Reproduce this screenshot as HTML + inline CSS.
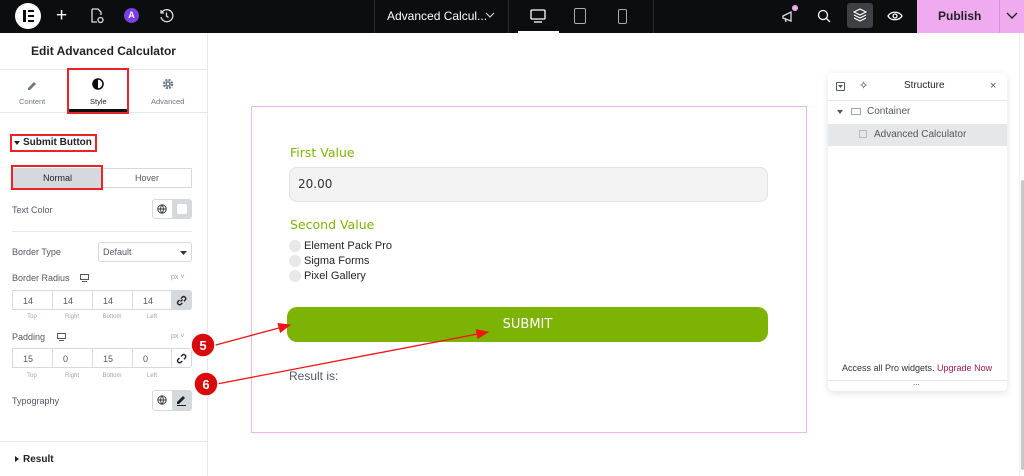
<!DOCTYPE html>
<html><head><meta charset="utf-8"><style>
*{box-sizing:border-box;margin:0;padding:0}
body{width:1024px;height:476px;overflow:hidden;position:relative;background:#fff;font-family:"Liberation Sans",sans-serif;color:#1f2124}
.a{position:absolute}
.t{position:absolute;white-space:nowrap}
.lbl{font-size:9px;color:#515962}
.sm{font-size:6px;color:#9da5ae;text-align:center;width:40px}
.inp{position:absolute;height:20px;border:1px solid #d5d8dc;font-size:9px;color:#515962;padding:5px 0 0 10px;background:#fff}
.red{position:absolute;border:2px solid #e8232a}
</style></head><body>
<!-- top bar -->
<div class="a" style="left:0;top:0;width:1024px;height:33px;background:#0c0d0e"></div>
<div class="a" style="top:3px;left:15px;width:26px;height:26px;border-radius:50%;background:#fff"></div>
<div class="a" style="left:23px;top:10px;width:3px;height:12px;background:#0c0d0e"></div>
<div class="a" style="left:28px;top:10px;width:6px;height:2px;background:#0c0d0e"></div>
<div class="a" style="left:28px;top:15px;width:6px;height:2px;background:#0c0d0e"></div>
<div class="a" style="left:28px;top:20px;width:6px;height:2px;background:#0c0d0e"></div>
<div class="t" style="left:56px;top:5px;color:#fff;font-size:19px;font-weight:300">+</div>
<svg class="a" style="left:90px;top:8px" width="14" height="16" fill="none" stroke="#ddd" stroke-width="1.3"><path d="M2 1h6l3 3v3M2 1v13h5"/><circle cx="10.5" cy="12" r="2.5"/></svg>
<div class="a" style="left:124px;top:8px;width:15px;height:15px;border-radius:50%;background:#7b3fe4;color:#fff;font-size:9px;font-weight:bold;text-align:center;line-height:15px">A</div>
<svg class="a" style="left:159px;top:8px" width="15" height="15" fill="none" stroke="#ddd" stroke-width="1.3"><path d="M2.5 5A6 6 0 1 1 2 9M2 2v3h3M7.5 4.5v3.5l2 1.5"/></svg>
<div class="a" style="left:374px;top:0;width:1px;height:33px;background:#2b2c2e"></div>
<div class="t" style="left:387px;top:9px;color:#fff;font-size:12px">Advanced Calcul...</div>
<svg class="a" style="left:485px;top:12px" width="10" height="7" fill="none" stroke="#ccc" stroke-width="1.2"><path d="M1 1l4 4 4-4"/></svg>
<div class="a" style="left:508px;top:0;width:1px;height:33px;background:#2b2c2e"></div>
<svg class="a" style="left:530px;top:9px" width="16" height="14" fill="none" stroke="#fff" stroke-width="1.3"><rect x="1" y="1" width="14" height="9" rx="1"/><path d="M4 13h8"/></svg>
<div class="a" style="left:518px;top:31px;width:41px;height:2px;background:#fff"></div>
<div class="a" style="left:574px;top:8px;width:12px;height:16px;border:1.3px solid #aaa;border-radius:2px"></div>
<div class="a" style="left:618px;top:9px;width:9px;height:15px;border:1.3px solid #aaa;border-radius:2px"></div>
<div class="a" style="left:653px;top:0;width:1px;height:33px;background:#2b2c2e"></div>
<svg class="a" style="left:781px;top:8px" width="16" height="16" fill="none" stroke="#ddd" stroke-width="1.3"><path d="M2 8l8-4v9L2 10zM4 10l1 4"/></svg>
<div class="a" style="left:792px;top:5px;width:6px;height:6px;border-radius:50%;background:#f0abf0"></div>
<svg class="a" style="left:817px;top:9px" width="14" height="14" fill="none" stroke="#fff" stroke-width="1.3"><circle cx="6" cy="6" r="4.5"/><path d="M9.5 9.5l3.5 3.5"/></svg>
<div class="a" style="left:847px;top:3px;width:26px;height:25px;background:#3f4044;border-radius:3px"></div>
<svg class="a" style="left:853px;top:8px" width="14" height="14" fill="none" stroke="#fff" stroke-width="1.1"><path d="M7 1l6 3-6 3-6-3zM1 7l6 3 6-3M1 10l6 3 6-3"/></svg>
<svg class="a" style="left:887px;top:10px" width="16" height="12" fill="none" stroke="#fff" stroke-width="1.3"><path d="M1 6C4 1 12 1 15 6 12 11 4 11 1 6z"/><circle cx="8" cy="6" r="2"/></svg>
<div class="a" style="left:917px;top:0;width:107px;height:33px;background:#f0abf0"></div>
<div class="t" style="left:938px;top:9px;font-size:12px;font-weight:bold;color:#1f2124">Publish</div>
<div class="a" style="left:999px;top:0;width:1px;height:33px;background:#d98fd9"></div>
<svg class="a" style="left:1006px;top:12px" width="12" height="8" fill="none" stroke="#1f2124" stroke-width="1.4"><path d="M1 1l5 5 5-5"/></svg>
<!-- left panel -->
<div class="a" style="left:207px;top:33px;width:1px;height:443px;background:#e6e8ea"></div>
<div class="t" style="left:0;width:207px;text-align:center;top:44px;font-size:12px;font-weight:bold">Edit Advanced Calculator</div>
<div class="a" style="left:0;top:69px;width:207px;height:1px;background:#e6e8ea"></div>
<div class="a" style="left:0;top:112px;width:207px;height:1px;background:#e6e8ea"></div>
<svg class="a" style="left:27px;top:80px" width="11" height="11" fill="#6d7882"><path d="M1 8l6-6 2 2-6 6H1z"/></svg>
<div class="t" style="left:19px;top:97px;font-size:7.5px;color:#6d7882">Content</div>
<svg class="a" style="left:92px;top:78px" width="12" height="12"><circle cx="6" cy="6" r="5" fill="none" stroke="#0c0d0e" stroke-width="1.6"/><path d="M6 1a5 5 0 0 0 0 10z" fill="#0c0d0e"/></svg>
<div class="t" style="left:90px;top:97px;font-size:7.5px;color:#1f2124">Style</div>
<div class="a" style="left:68px;top:109px;width:60px;height:3px;background:#0c0d0e"></div>
<div class="red" style="left:67px;top:68px;width:62px;height:46px"></div>
<svg class="a" style="left:162px;top:78px" width="12" height="12"><circle cx="6" cy="6" r="4" fill="none" stroke="#6d7882" stroke-width="2.4" stroke-dasharray="2 1.2"/><circle cx="6" cy="6" r="2.6" fill="#6d7882"/><circle cx="6" cy="6" r="1.2" fill="#fff"/></svg>
<div class="t" style="left:151px;top:97px;font-size:7.5px;color:#6d7882">Advanced</div>
<div class="red" style="left:10px;top:134px;width:87px;height:18px"></div>
<svg class="a" style="left:14px;top:141px" width="6" height="4"><path d="M0 0h6L3 4z" fill="#1f2124"/></svg>
<div class="t" style="left:23px;top:137px;font-size:10px;font-weight:bold">Submit Button</div>
<div class="a" style="left:11px;top:168px;width:181px;height:20px;border:1px solid #d5d8dc"></div>
<div class="a" style="left:12px;top:169px;width:89px;height:18px;background:#d5d8dc"></div>
<div class="red" style="left:11px;top:165px;width:92px;height:25px"></div>
<div class="t" style="left:43px;top:173px;font-size:9px">Normal</div>
<div class="t" style="left:135px;top:173px;font-size:9px;color:#515962">Hover</div>
<div class="t lbl" style="left:12px;top:205px">Text Color</div>
<div class="a" style="left:152px;top:199px;width:40px;height:20px;border:1px solid #d5d8dc;border-radius:3px;background:#fff"></div>
<div class="a" style="left:172px;top:200px;width:19px;height:18px;background:#d5d8dc"></div>
<div class="a" style="left:177px;top:204px;width:10px;height:10px;background:#fff;border-radius:2px"></div>
<svg class="a" style="left:157px;top:204px" width="10" height="10" fill="none" stroke="#333" stroke-width=".9"><circle cx="5" cy="5" r="4.2"/><path d="M.8 5h8.4M5 .8c-2 2.5-2 5.9 0 8.4M5 .8c2 2.5 2 5.9 0 8.4"/></svg>
<div class="a" style="left:12px;top:231px;width:180px;height:1px;background:#e6e8ea"></div>
<div class="t lbl" style="left:12px;top:247px">Border Type</div>
<div class="a" style="left:98px;top:242px;width:94px;height:20px;border:1px solid #d5d8dc;border-radius:3px"></div>
<div class="t" style="left:103px;top:247px;font-size:9px;color:#515962">Default</div>
<svg class="a" style="left:180px;top:251px" width="7" height="4"><path d="M0 0h7L3.5 4z" fill="#333"/></svg>
<div class="t lbl" style="left:12px;top:273px">Border Radius</div>
<div class="a" style="left:80px;top:274px;width:9px;height:6px;border:1px solid #515962"></div>
<div class="a" style="left:82px;top:281px;width:5px;height:1px;background:#515962"></div>
<div class="t" style="left:171px;top:274px;font-size:7px;color:#9da5ae">px ˅</div>
<div class="inp" style="left:12px;top:290px;width:41px">14</div>
<div class="inp" style="left:52px;top:290px;width:41px">14</div>
<div class="inp" style="left:92px;top:290px;width:41px">14</div>
<div class="inp" style="left:132px;top:290px;width:40px">14</div>
<div class="a" style="left:171px;top:290px;width:21px;height:20px;background:#d5d8dc;border-radius:0 3px 3px 0"></div>
<svg class="a" style="left:176px;top:295px" width="11" height="11" fill="none" stroke="#1f2124" stroke-width="1.4"><path d="M4.5 6.5l2-2M3.5 5L2 6.5a2 2 0 0 0 2.8 2.8L6.3 8M5 3.5L6.5 2a2 2 0 0 1 2.8 2.8L8 6.3"/></svg>
<div class="t sm" style="left:12px;top:314px">Top</div><div class="t sm" style="left:52px;top:314px">Right</div><div class="t sm" style="left:92px;top:314px">Bottom</div><div class="t sm" style="left:132px;top:314px">Left</div>
<div class="t lbl" style="left:12px;top:332px">Padding</div>
<div class="a" style="left:57px;top:333px;width:9px;height:6px;border:1px solid #515962"></div>
<div class="a" style="left:59px;top:340px;width:5px;height:1px;background:#515962"></div>
<div class="t" style="left:171px;top:333px;font-size:7px;color:#9da5ae">px ˅</div>
<div class="inp" style="left:12px;top:348px;width:41px">15</div>
<div class="inp" style="left:52px;top:348px;width:41px">0</div>
<div class="inp" style="left:92px;top:348px;width:41px">15</div>
<div class="inp" style="left:132px;top:348px;width:40px">0</div>
<div class="a" style="left:171px;top:348px;width:21px;height:20px;border:1px solid #d5d8dc;border-left:none;border-radius:0 3px 3px 0"></div>
<svg class="a" style="left:176px;top:353px" width="11" height="11" fill="none" stroke="#1f2124" stroke-width="1.4"><path d="M3.5 5L2 6.5a2 2 0 0 0 2.8 2.8L6.3 8M5 3.5L6.5 2a2 2 0 0 1 2.8 2.8L8 6.3"/></svg>
<div class="t sm" style="left:12px;top:373px">Top</div><div class="t sm" style="left:52px;top:373px">Right</div><div class="t sm" style="left:92px;top:373px">Bottom</div><div class="t sm" style="left:132px;top:373px">Left</div>
<div class="t lbl" style="left:12px;top:396px">Typography</div>
<div class="a" style="left:152px;top:390px;width:40px;height:21px;border:1px solid #d5d8dc;border-radius:3px"></div>
<div class="a" style="left:172px;top:391px;width:19px;height:19px;background:#d5d8dc"></div>
<svg class="a" style="left:157px;top:395px" width="10" height="10" fill="none" stroke="#333" stroke-width=".9"><circle cx="5" cy="5" r="4.2"/><path d="M.8 5h8.4M5 .8c-2 2.5-2 5.9 0 8.4M5 .8c2 2.5 2 5.9 0 8.4"/></svg>
<svg class="a" style="left:176px;top:394px" width="11" height="12" fill="#1f2124"><path d="M1 8l6-6 2 2-6 6H1zM1 11h9v1H1z"/></svg>
<div class="a" style="left:0;top:441px;width:207px;height:1px;background:#e6e8ea"></div>
<svg class="a" style="left:15px;top:456px" width="4" height="6"><path d="M0 0v6l4-3z" fill="#1f2124"/></svg>
<div class="t" style="left:23px;top:454px;font-size:10px;font-weight:bold">Result</div>
<!-- canvas form -->
<div class="a" style="left:251px;top:106px;width:556px;height:327px;border:1px solid #f0b4f0"></div>
<div class="t" style="left:290px;top:145px;font-size:12.5px;color:#7cb305;font-family:'DejaVu Sans',sans-serif">First Value</div>
<div class="a" style="left:289px;top:167px;width:479px;height:35px;background:#f3f3f3;border:1px solid #e6e0e0;border-radius:8px"></div>
<div class="t" style="left:298px;top:177px;font-size:12px;color:#333;font-family:'DejaVu Sans',sans-serif">20.00</div>
<div class="t" style="left:290px;top:217px;font-size:12.5px;color:#7cb305;font-family:'DejaVu Sans',sans-serif">Second Value</div>
<div class="a" style="left:289px;top:240px;width:12px;height:12px;border-radius:50%;background:#e8e8e8"></div>
<div class="a" style="left:289px;top:255px;width:12px;height:12px;border-radius:50%;background:#e8e8e8"></div>
<div class="a" style="left:289px;top:270px;width:12px;height:12px;border-radius:50%;background:#e8e8e8"></div>
<div class="t" style="left:304px;top:240px;font-size:11px;color:#1f2124">Element Pack Pro</div>
<div class="t" style="left:304px;top:255px;font-size:11px;color:#1f2124">Sigma Forms</div>
<div class="t" style="left:304px;top:270px;font-size:11px;color:#1f2124">Pixel Gallery</div>
<div class="a" style="left:287px;top:307px;width:481px;height:35px;background:#7cb305;border-radius:10px"></div>
<div class="t" style="left:287px;width:481px;text-align:center;top:317px;font-size:13px;color:#fff;font-family:'DejaVu Sans',sans-serif">SUBMIT</div>
<div class="t" style="left:289px;top:369px;font-size:12px;color:#515962">Result is:</div>
<!-- structure panel -->
<div class="a" style="left:828px;top:73px;width:179px;height:318px;background:#fff;border-radius:5px;box-shadow:0 2px 8px rgba(0,0,0,.12)"></div>
<div class="a" style="left:836px;top:82px;width:9px;height:9px;border:1px solid #515962;border-radius:1px"></div>
<svg class="a" style="left:838px;top:85px" width="5" height="3"><path d="M0 0h5L2.5 3z" fill="#515962"/></svg>
<div class="t" style="left:859px;top:79px;font-size:11px;color:#333">✧</div>
<div class="t" style="left:904px;top:80px;font-size:10px">Structure</div>
<div class="t" style="left:990px;top:80px;font-size:11px;color:#515962">×</div>
<div class="a" style="left:828px;top:100px;width:179px;height:1px;background:#e6e8ea"></div>
<svg class="a" style="left:837px;top:110px" width="6" height="4"><path d="M0 0h6L3 4z" fill="#515962"/></svg>
<div class="a" style="left:851px;top:108px;width:10px;height:7px;border:1px solid #9da5ae"></div>
<div class="t" style="left:867px;top:106px;font-size:10px;color:#515962">Container</div>
<div class="a" style="left:828px;top:124px;width:179px;height:22px;background:#e6e7e8"></div>
<div class="a" style="left:859px;top:130px;width:8px;height:8px;border:1px solid #bbb"></div>
<div class="t" style="left:874px;top:129px;font-size:10px;color:#515962">Advanced Calculator</div>
<div class="t" style="left:842px;top:363px;font-size:9px;color:#333">Access all Pro widgets. <span style="color:#a4194d">Upgrade Now</span></div>
<div class="a" style="left:828px;top:380px;width:179px;height:1px;background:#e6e8ea"></div>
<div class="t" style="left:913px;top:378px;font-size:8px;color:#333">...</div>
<!-- scrollbar -->
<div class="a" style="left:1019px;top:33px;width:1px;height:443px;background:#eee"></div>
<div class="a" style="left:1021px;top:180px;width:3px;height:290px;background:#c8c8c8;border-radius:2px"></div>
<!-- annotations -->
<svg class="a" style="left:0;top:0" width="1024" height="476">
<defs><marker id="m" markerWidth="10" markerHeight="8" refX="9" refY="4" orient="auto"><path d="M0 0L10 4L0 8z" fill="#f01414"/></marker></defs>
<path d="M212 346L290 325" stroke="#f01414" stroke-width="1.3" marker-end="url(#m)"/>
<path d="M217 384L488 332" stroke="#f01414" stroke-width="1.3" marker-end="url(#m)"/>
<circle cx="203" cy="345" r="12" fill="#d90a0a" stroke="#fff" stroke-width="1.5"/>
<circle cx="206" cy="384" r="12" fill="#d90a0a" stroke="#fff" stroke-width="1.5"/>
<text x="203" y="350" text-anchor="middle" font-size="13" font-weight="bold" fill="#fff" font-family="Liberation Sans">5</text>
<text x="206" y="389" text-anchor="middle" font-size="13" font-weight="bold" fill="#fff" font-family="Liberation Sans">6</text>
</svg>
</body></html>
